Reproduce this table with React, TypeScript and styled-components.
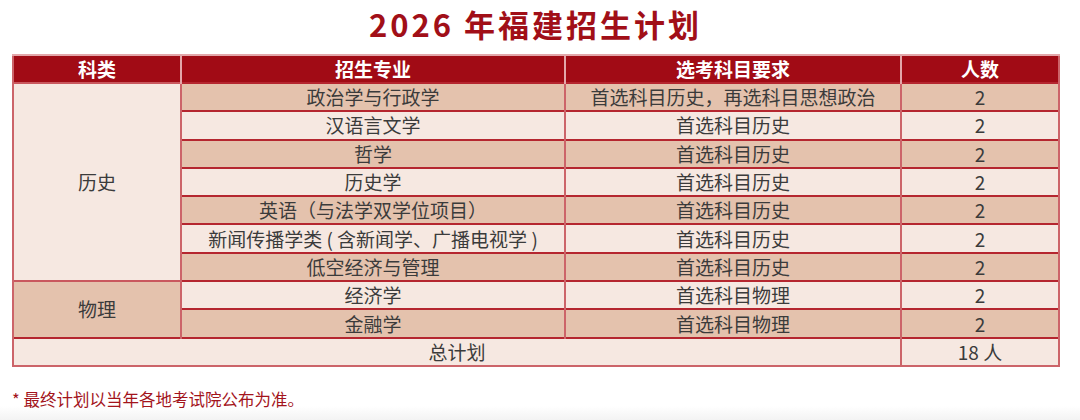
import React from 'react';
import styled, { createGlobalStyle } from 'styled-components';

interface Major {
  name: string;
  req: string;
  count: number;
}

interface Group {
  category: string;
  tone: 'light' | 'dark';
  majors: Major[];
}

const groups: Group[] = [
  {
    category: '历史',
    tone: 'light',
    majors: [
      { name: '政治学与行政学', req: '首选科目历史，再选科目思想政治', count: 2 },
      { name: '汉语言文学', req: '首选科目历史', count: 2 },
      { name: '哲学', req: '首选科目历史', count: 2 },
      { name: '历史学', req: '首选科目历史', count: 2 },
      { name: '英语（与法学双学位项目）', req: '首选科目历史', count: 2 },
      { name: '新闻传播学类 ( 含新闻学、广播电视学 )', req: '首选科目历史', count: 2 },
      { name: '低空经济与管理', req: '首选科目历史', count: 2 },
    ],
  },
  {
    category: '物理',
    tone: 'dark',
    majors: [
      { name: '经济学', req: '首选科目物理', count: 2 },
      { name: '金融学', req: '首选科目物理', count: 2 },
    ],
  },
];

const columns = [
  { label: '科类', width: 168 },
  { label: '招生专业', width: 384 },
  { label: '选考科目要求', width: 336 },
  { label: '人数', width: 158 },
];

const GlobalStyle = createGlobalStyle`
  html, body {
    margin: 0;
    padding: 0;
    background: #ffffff;
  }
  body {
    font-family: "Noto Sans CJK SC", "Noto Sans", sans-serif;
    color: #3b3b3b;
  }
`;

const Page = styled.div`
  width: 1080px;
  height: 420px;
  box-sizing: border-box;
  padding: 3px 0 0 12px;
  background: linear-gradient(to bottom, #ffffff 0, #ffffff 406px, #f3f3f3 420px);
  display: flex;
  flex-direction: column;
`;

const Title = styled.h1`
  margin: 0;
  width: 1047px;
  height: 51px;
  line-height: 41px;
  text-align: center;
  font-size: 31px;
  font-weight: 700;
  color: #a10f18;
  letter-spacing: 3px;
`;

const Table = styled.table`
  width: 1046px;
  border-collapse: collapse;
  table-layout: fixed;
  border: 2px solid #cc6469;
`;

const HeadCell = styled.th`
  height: 26px;
  padding: 0;
  background: #a10b15;
  color: #ffffff;
  font-size: 19px;
  font-weight: 700;
  line-height: 26px;
  border-left: 2px solid #e3a7aa;
  border-top: 2px solid #e3a7aa;
  &:first-child {
    border-left-color: #cc6469;
  }
`;

const Cell = styled.td<{ $tone: 'light' | 'dark' }>`
  height: 26.3px;
  padding: 0;
  text-align: center;
  font-size: 19px;
  line-height: 26px;
  color: #3b3b3b;
  white-space: nowrap;
  background: ${p => (p.$tone === 'dark' ? '#e4c2ad' : '#f6e8e1')};
  border-top: 2px solid #b5262f;
  border-left: 2px solid #cc6469;
  border-right: 2px solid #cc6469;
`;

const CategoryCell = styled(Cell)`
  border-top-color: #c9585e;
`;

const Footnote = styled.p`
  margin: 20px 0 0 0;
  font-size: 16.5px;
  line-height: 24px;
  color: #a3141c;
`;

export default function App() {
  const total = groups.reduce((s, g) => s + g.majors.reduce((a, m) => a + m.count, 0), 0);
  let rowIndex = 0;

  return (
    <>
      <GlobalStyle />
      <Page>
        <Title>2026 年福建招生计划</Title>
        <Table>
          <colgroup>
            {columns.map(c => (
              <col key={c.label} style={{ width: c.width }} />
            ))}
          </colgroup>
          <thead>
            <tr>
              {columns.map(c => (
                <HeadCell key={c.label}>{c.label}</HeadCell>
              ))}
            </tr>
          </thead>
          <tbody>
            {groups.map(g =>
              g.majors.map((m, i) => {
                const tone: 'light' | 'dark' = rowIndex++ % 2 === 0 ? 'dark' : 'light';
                return (
                  <tr key={g.category + m.name}>
                    {i === 0 && (
                      <CategoryCell $tone={g.tone} rowSpan={g.majors.length}>
                        {g.category}
                      </CategoryCell>
                    )}
                    <Cell $tone={tone}>{m.name}</Cell>
                    <Cell $tone={tone}>{m.req}</Cell>
                    <Cell $tone={tone}>{m.count}</Cell>
                  </tr>
                );
              })
            )}
            <tr>
              <Cell $tone="light" colSpan={3}>总计划</Cell>
              <Cell $tone="light">{total} 人</Cell>
            </tr>
          </tbody>
        </Table>
        <Footnote>* 最终计划以当年各地考试院公布为准。</Footnote>
      </Page>
    </>
  );
}
